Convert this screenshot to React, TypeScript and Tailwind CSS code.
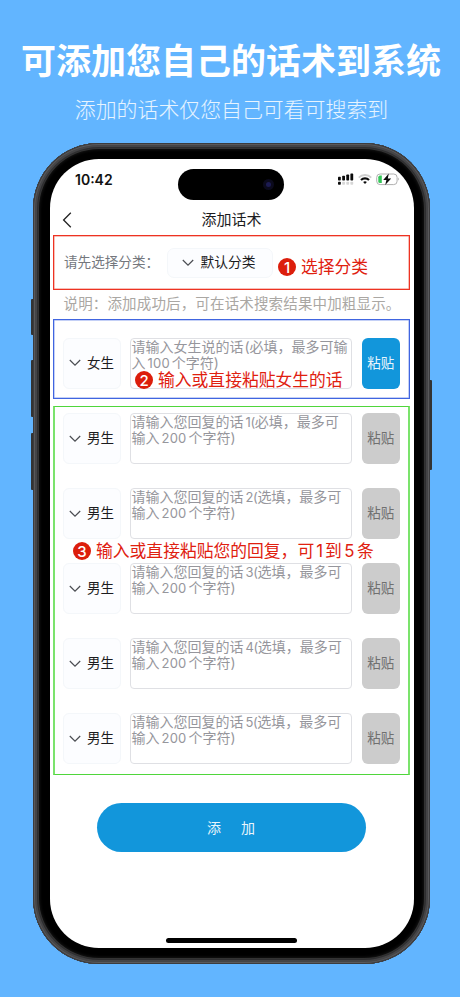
const replies = [
  { id: 1, kind: "必填" },
  { id: 2, kind: "选填" },
  { id: 3, kind: "选填" },
  { id: 4, kind: "选填" },
  { id: 5, kind: "选填" },
];

function Chevron() {
  return (
    <svg width="12" height="8" viewBox="0 0 12 8" fill="none" stroke="#4a4d52" strokeWidth="1.2">
      <path d="M0.8 1 L6 6.2 L11.2 1" />
    </svg>
  );
}

// Latin digits run a little smaller than the Chinese around them
function Num(props: { children: React.ReactNode }) {
  return <span className="mx-[2px] text-[0.93em] tracking-[0.2px]">{props.children}</span>;
}

function Badge(props: { n: number }) {
  return (
    <span className="flex h-[18px] w-[18px] shrink-0 items-center justify-center rounded-full bg-[#dc1e0c] text-[15px] leading-none font-medium text-white">
      {props.n}
    </span>
  );
}

function Note(props: { n: number; className: string; children: React.ReactNode }) {
  return (
    <div
      className={`absolute z-10 flex h-[20px] items-center gap-[5px] text-[16.8px] leading-[20px] whitespace-nowrap text-[#e0200f] ${props.className}`}
    >
      <Badge n={props.n} />
      <span>{props.children}</span>
    </div>
  );
}

function SpeechRow(props: { role: string; active?: boolean; children: React.ReactNode }) {
  return (
    <div className="flex h-[51px]">
      <div className="flex w-[58px] items-center gap-[6px] rounded-[6px] border border-[#f4f7fa] bg-[#fcfdff] pl-[5px] text-[13.5px] text-[#1c1c1e]">
        <Chevron />
        <span>{props.role}</span>
      </div>
      <div className="ml-[9px] w-[222px] rounded-[4px] border border-[#dfe0e4] pl-[0.5px] text-[14px] leading-[16px] whitespace-nowrap text-[#96969c]">
        {props.children}
      </div>
      <div
        className={`ml-[9.5px] flex w-[38.5px] items-center justify-center rounded-[6px] text-[13.5px] ${
          props.active ? "bg-[#1296db] text-[#e8f5fc]" : "bg-[#cccccc] text-[#707070]"
        }`}
      >
        粘贴
      </div>
    </div>
  );
}

function StatusBar() {
  return (
    <div className="relative flex h-[41px] justify-between pt-[12px] pr-[10px] pl-[22px]">
      <span className="text-[14px] leading-[17px] font-semibold text-[#111]">10:42</span>
      <div className="absolute top-[9.5px] left-[125px] flex h-[31px] w-[106px] items-center justify-end rounded-full bg-black pr-[10px]">
        <span className="flex h-[11px] w-[11px] items-center justify-center rounded-full bg-[#0b0a1c]">
          <span className="h-[5px] w-[5px] rounded-full bg-[#1c1b52]" />
        </span>
      </div>
      <svg width="62" height="14" viewBox="0 0 62 14" className="mt-[2px]">
        <g fill="#0b0b0b">
          <rect x="0" y="3.8" width="2.8" height="3.6" rx="0.7" />
          <rect x="4.2" y="2.8" width="2.8" height="4.6" rx="0.7" />
          <rect x="8.3" y="1.6" width="2.8" height="5.8" rx="0.7" />
          <rect x="12.4" y="0.4" width="2.8" height="7" rx="0.7" />
          <rect x="0" y="8.8" width="2.8" height="3" rx="0.7" />
        </g>
        <g fill="#d6d6d6">
          <rect x="4.2" y="8.8" width="2.8" height="3" rx="0.7" />
          <rect x="8.3" y="8.8" width="2.8" height="3" rx="0.7" />
          <rect x="12.4" y="8.8" width="2.8" height="3" rx="0.7" />
        </g>
        <g fill="none" strokeWidth="1.9">
          <path d="M20.8 4.6 A8.6 8.6 0 0 1 33.2 4.6" stroke="#cfcfcf" />
          <path d="M23 7.1 A5.6 5.6 0 0 1 31 7.1" stroke="#0b0b0b" strokeWidth="2.1" />
        </g>
        <path d="M25.1 9.1 A2.8 2.8 0 0 1 28.9 9.1 L27 11.1 Z" fill="#0b0b0b" />
        <rect x="38.7" y="1" width="20.4" height="10.6" rx="3.4" fill="none" stroke="#b0b0b0" />
        <path d="M60.2 4.6 Q62 6.2 60.2 7.8 Z" fill="#a8a8a8" />
        <path d="M42 2.5 H43.8 V10.1 H42 Q40.3 10.1 40.3 8.4 V4.2 Q40.3 2.5 42 2.5 Z" fill="#35c759" />
        <path d="M50.8 0.6 L45.2 7 H48.4 L47.2 12 L53.2 5.6 H49.8 Z" fill="#0b0b0b" />
      </svg>
    </div>
  );
}

function Screen() {
  return (
    <div className="relative h-[788.5px] overflow-hidden rounded-[49px] bg-white px-[3.5px]">
      <StatusBar />
      <div className="grid h-[35px] grid-cols-3 items-center">
        <svg width="10" height="16" viewBox="0 0 10 16" fill="none" stroke="#222" strokeWidth="1.3" className="mt-[4px] ml-[9px]">
          <path d="M8.8 0.8 L1.6 8 L8.8 15.2" />
        </svg>
        <h2 className="mt-[4px] text-center text-[15px] leading-[18px] text-[#1c1c1e]">添加话术</h2>
      </div>

      <section className="relative flex h-[55px] items-center border border-[#ee3322] pl-[10px] shadow-[inset_0_0_0_0.5px_#f08075]">
        <span className="w-[103px] text-[13.6px] text-[#74777d]">请先选择分类：</span>
        <div className="flex h-[30px] w-[106px] items-center justify-center gap-[6px] rounded-[7px] border border-[#f4f7fa] bg-[#fcfdff] pr-[2px] text-[13.8px] text-[#1c1c1e]">
          <Chevron />
          <span>默认分类</span>
        </div>
        <Note n={1} className="top-[21px] left-[224px]">
          选择分类
        </Note>
      </section>

      <p className="h-[28.5px] pl-[10.5px] text-[14.5px] leading-[27px] tracking-[0.15px] whitespace-nowrap text-[#aaa7a3]">
        说明：添加成功后，可在话术搜索结果中加粗显示。
      </p>

      <section className="relative h-[80px] border border-[#4065e0] pt-[18px] pl-[9px] shadow-[inset_0_0_0_0.5px_#8aa2ee]">
        <SpeechRow role="女生" active>
          请输入女生说的话<span className="ml-[1px]">(</span>必填，最多可输
          <br />入<Num>100</Num>个字符)
        </SpeechRow>
        <Note n={2} className="top-[50.5px] left-[81px]">
          输入或直接粘贴女生的话
        </Note>
      </section>

      <section className="relative mt-[7.5px] flex h-[369px] flex-col gap-[24px] border-x-2 border-y border-x-[#7be36c] border-y-[#4fd63b] pt-[6px] pl-[8px]">
        {replies.map((r) => (
          <SpeechRow key={r.id} role="男生">
            请输入您回复的话
            <span className="ml-[2px] text-[13px] tracking-[-0.4px]">{r.id}(</span>
            {r.kind}，最多可
            <br />
            输入<Num>200</Num>个字符)
          </SpeechRow>
        ))}
        <Note n={3} className="top-[134px] left-[18px]">
          输入或直接粘贴您的回复，可<span className="mx-[2px]">1</span>到
          <span className="mx-[2.5px]">5</span>条
        </Note>
      </section>

      <button className="mx-auto mt-[28px] flex h-[49px] w-[268.5px] items-center justify-center gap-[20px] rounded-full bg-[#1296db] pr-[1px] text-[14px] text-[#e8f5fc]">
        <span>添</span>
        <span>加</span>
      </button>
      <div className="mx-auto mt-[86px] h-[4.5px] w-[131px] rounded-full bg-black" />
    </div>
  );
}

export default function App() {
  return (
    <main className="h-[997px] w-[460px] overflow-hidden bg-[#62b5ff] font-['Inter','Noto_Sans_CJK_SC',sans-serif]">
      <header className="h-[143px] pt-[41px] text-center whitespace-nowrap text-white">
        <h1 className="pl-[2px] text-[35px] leading-[40px] font-bold">可添加您自己的话术到系统</h1>
        <p className="mt-[9px] pl-[3px] text-[20.9px] leading-[40px] font-light text-white/85">添加的话术仅您自己可看可搜索到</p>
      </header>

      <div className="relative ml-[33px] w-[397px]">
        <span className="absolute top-[156px] -left-[2.5px] h-[36px] w-[3px] rounded-l-[1px] bg-[#333]" />
        <span className="absolute top-[217px] -left-[2.5px] h-[57px] w-[3px] rounded-l-[1px] bg-[#333]" />
        <span className="absolute top-[290px] -left-[2.5px] h-[57px] w-[3px] rounded-l-[1px] bg-[#333]" />
        <span className="absolute top-[237px] -right-[2px] h-[90px] w-[3px] rounded-r-[1px] bg-[#333]" />
        <div className="relative h-[821px] rounded-[66px] bg-black px-[16.5px] pt-[16px] shadow-[inset_0_0_0_1px_#3c3c3e,inset_0_0_0_2px_#59595b,inset_0_0_0_4px_#444446,inset_0_0_0_5px_#2e2e30,inset_0_0_0_6px_#333333,inset_0_0_3px_7px_#141414]">
          <Screen />
        </div>
      </div>
    </main>
  );
}
